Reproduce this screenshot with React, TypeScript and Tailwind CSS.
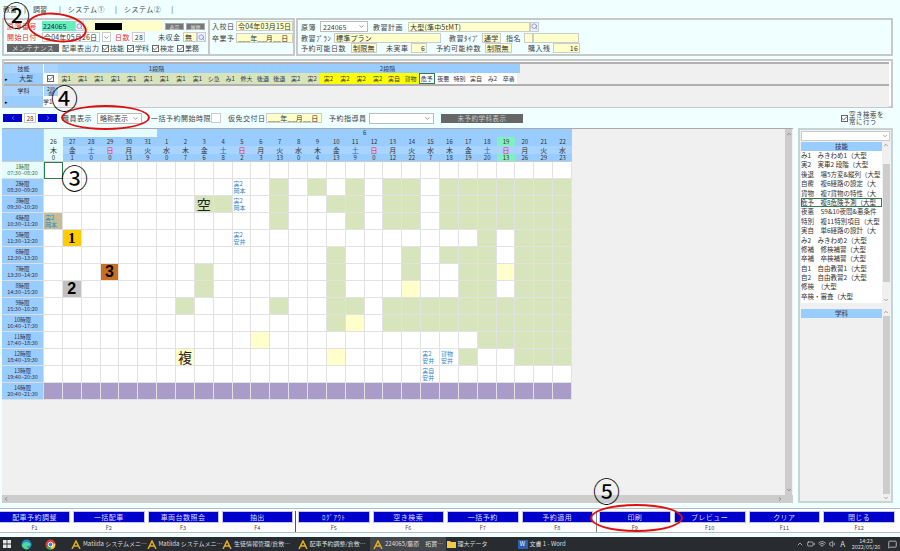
import { ChevronDown, ChevronUp, ChevronLeft, ChevronRight, Search, Check, Volume1, Wifi, Battery, MessageSquare } from 'lucide-react';
import type { ReactNode } from 'react';

const FONT = { fontFamily: '"Noto Sans CJK JP", "Liberation Sans", sans-serif' };

const DATES = [26, 27, 28, 29, 30, 31, 1, 2, 3, 4, 5, 6, 7, 8, 9, 10, 11, 12, 13, 14, 15, 16, 17, 18, 19, 20, 21, 22];
const WEEK = '木金土日月火水木金土日月火水木金土日月火水木金土日月火水'.split('');
const COUNTS = [0, 1, 0, 0, 13, 9, 0, 7, 6, 8, 2, 3, 13, 0, 4, 13, 9, 0, 12, 22, 7, 18, 19, 20, 13, 26, 29, 23];

const PERIODS = [
  ['1時限', '07:30~08:20'],
  ['2時限', '08:30~09:20'],
  ['3時限', '09:30~10:20'],
  ['4時限', '10:30~11:20'],
  ['5時限', '11:30~12:20'],
  ['6時限', '12:30~13:20'],
  ['7時限', '13:30~14:20'],
  ['8時限', '14:30~15:20'],
  ['9時限', '15:30~16:20'],
  ['10時限', '16:40~17:30'],
  ['11時限', '17:40~18:30'],
  ['12時限', '18:40~19:30'],
  ['13時限', '19:40~20:30'],
  ['14時限', '20:40~21:30'],
];

const LATE = [21, 22, 23, 24, 25, 26, 27];
const GREEN: number[][] = [
  [],
  [12, 14, 16, 18, 19, ...LATE],
  [8, 9, 12, 15, 16, 18, 19, ...LATE],
  [12, 16, 18, 19, ...LATE],
  [23, 25, 26, 27],
  [15, 19, 21, 22, 23, 25, 26, 27],
  [8, 15, 19, 22, 23, 25, 26, 27],
  [8, 15, 22, 23, 25, 26, 27],
  [7, 12, 15, 16, 18, 19, 20, 21, 22, 23, 24, 25, 26, 27],
  [15, 18, 19, 20, 21, 22, 23, 24, 25, 26, 27],
  [23, 24, 25, 26, 27],
  [22, 25, 26, 27],
  [],
  [],
];
const PALE: number[][] = [[], [], [], [], [], [], [24], [19], [], [16], [11], [7, 15], [], []];
const NOTES: Record<string, [string, string]> = {
  '1-10': ['実2', '岡本'],
  '2-10': ['実2', '岡本'],
  '3-0': ['実2', '岡本'],
  '4-10': ['実2', '安井'],
  '11-20': ['実2', '安井'],
  '11-21': ['貨物', '安井'],
  '12-20': ['実自', '安井'],
};

const STEP1 = ['実1', '実1', '実1', '実1', '実1', '実1', '実1', '実1', '実1', 'シ急', 'み1', '修大'];
const STEP2 = ['後退', '後退', '実2', '実2', '実2', '実2', '実2', '実2', '実自', '貨物', '危予', '夜悪', '特別', '実自', 'み2', '卒審'];

const SKILLS = [
  'み1　みきわめ1（大型',
  '実2　実車2 段階（大型',
  '後退　場5方変&縦列（大型',
  '自覆　複6経路の設定（大',
  '貨物　複7貨物の特性（大',
  '危予　複8危険予測（大型',
  '夜悪　S9&10夜間&悪条件',
  '特別　複11特別項目（大型',
  '実自　単6経路の設計（大',
  'み2　みきわめ2（大型',
  '修補　修検補習（大型',
  '卒補　卒検補習（大型',
  '自1　自由教習1（大型',
  '自2　自由教習2（大型',
  '修検　（大型',
  '卒検・審査（大型',
];

const KEYS_A = ['配車予約調整', '一括配車', '車両台数照会', '抽出'];
const KEYS_B = ['ﾛｸﾞｱｳﾄ', '空き検索', '一括予約', '予約適用'];
const KEYS_C = ['印刷', 'プレビュー', 'クリア', '閉じる'];

const TASKS = ['Matilda システムメニ…', 'Matilda システムメニ…', '生徒情報管理/倉敷…', '配車予約調整/倉敷…', '224065/藤原　拓實…'];

function Label({ w, children, red }: { w: number; children: ReactNode; red?: boolean }) {
  return (
    <span
      className={`shrink-0 whitespace-nowrap text-[7px] leading-[10px] tracking-[0.5px] ${red ? 'text-[#f03030]' : 'text-[#444]'}`}
      style={{ width: w }}
    >
      {children}
    </span>
  );
}

function Box({ w, children, right, yellow = true }: { w: number; children?: ReactNode; right?: boolean; yellow?: boolean }) {
  return (
    <span
      className={`flex h-[10px] shrink-0 items-center overflow-hidden whitespace-nowrap border border-[#ccc] px-[1px] text-[7px] tracking-[0.2px] text-[#333] ${yellow ? 'bg-[#ffffcc]' : 'bg-white'} ${right ? 'justify-end' : ''}`}
      style={{ width: w }}
    >
      {children}
    </span>
  );
}

function Drop({ w, children }: { w: number; children?: ReactNode }) {
  return (
    <span className="flex h-[11px] shrink-0 items-center justify-between border border-[#bbb] bg-white px-[2px] text-[7px] text-[#444]" style={{ width: w }}>
      {children}
      <ChevronDown size={7} className="ml-auto text-[#555]" />
    </span>
  );
}

function Lens() {
  return (
    <span className="flex h-[10px] w-[9px] shrink-0 items-center justify-center border border-[#ccc] bg-[#eef]">
      <Search size={7} className="text-[#5577aa]" />
    </span>
  );
}

function Tick({ label }: { label?: string }) {
  return (
    <span className="flex shrink-0 items-center gap-[1px] text-[7px] text-[#444]">
      <span className="flex h-[7px] w-[7px] items-center justify-center border border-[#666] bg-white">
        <Check size={7} strokeWidth={3} className="shrink-0 text-[#555]" />
      </span>
      {label}
    </span>
  );
}

function Cell({ row, col }: { row: number; col: number }) {
  const note = NOTES[`${row}-${col}`];
  let bg = 'bg-white';
  if (GREEN[row].includes(col)) bg = 'bg-[#d8e4bc]';
  if (PALE[row].includes(col)) bg = 'bg-[#ffffcc]';
  if (row === 13) bg = 'bg-[#a99cc8]';
  if (row === 3 && col === 0) bg = 'bg-[#c4bd97]';
  if (row === 4 && col === 1) bg = 'bg-[#ffcc00]';
  if (row === 6 && col === 3) bg = 'bg-[#c87020]';
  if (row === 7 && col === 1) bg = 'bg-[#c0c0c0]';
  const selected = row === 0 && col === 0;
  return (
    <div className={`flex h-[17px] min-w-0 items-center justify-center border-b border-r border-[#e2e2e2] ${bg} ${selected ? 'outline outline-1 -outline-offset-1 outline-[#2e7d4f]' : ''}`}>
      {note && (
        <span className="w-full whitespace-nowrap pl-[1px] text-left text-[6px] leading-[7px] text-[#2f86c8]">
          {note[0]}
          <br />
          {note[1]}
        </span>
      )}
      {row === 4 && col === 1 && <span className="text-[15px] font-bold leading-none text-black" style={{ fontFamily: '"Liberation Serif", serif' }}>1</span>}
      {row === 6 && col === 3 && <span className="text-[16px] font-bold leading-none text-black" style={{ fontFamily: '"Liberation Sans", sans-serif' }}>3</span>}
      {row === 7 && col === 1 && <span className="text-[16px] font-bold leading-none text-black" style={{ fontFamily: '"Liberation Sans", sans-serif' }}>2</span>}
      {row === 2 && col === 8 && <span className="text-[14px] leading-none text-[#222]">空</span>}
      {row === 11 && col === 7 && <span className="text-[14px] leading-none text-[#222]">複</span>}
    </div>
  );
}

function ScheduleGrid() {
  return (
    <div className="grid w-[570px] grid-cols-[42px_repeat(28,minmax(0,1fr))] text-center">
      <div className="row-span-4 border-b border-r border-[#ccc] bg-[#99ccff]" />
      <div className="col-span-6 h-[8px] bg-[#e6fbfb] text-[5px] leading-[8px]">&nbsp;</div>
      <div className="col-span-22 h-[8px] bg-[#99ccff] text-[6px] leading-[8px] text-[#333]">6</div>
      {DATES.map((d, i) => (
        <div key={`d${i}`} className={`h-[9px] text-[6px] leading-[9px] text-[#333] ${i === 0 ? 'bg-[#e6fbfb] text-[#2e7d4f]' : i === 24 ? 'bg-[#80f0c0]' : 'bg-[#99ccff]'}`}>
          {d}
        </div>
      ))}
      {WEEK.map((w, i) => (
        <div key={`w${i}`} className={`h-[8px] text-[7px] leading-[8px] ${w === '日' ? 'text-[#e03030]' : w === '土' ? 'text-[#1a70d0]' : 'text-[#333]'} ${i === 0 ? 'bg-[#e6fbfb] text-[#2e7d4f]' : 'bg-[#a8d4ff]'}`}>
          {w}
        </div>
      ))}
      {COUNTS.map((c, i) => (
        <div key={`c${i}`} className={`h-[8px] border-b border-[#ccc] text-[6px] leading-[7px] text-[#333] ${i === 0 ? 'bg-[#e6fbfb] text-[#2e7d4f]' : i === 24 ? 'bg-[#80f0c0]' : 'bg-[#99ccff]'}`}>
          {c}
        </div>
      ))}
      {PERIODS.map((p, r) => (
        <div key={p[0]} className="contents">
          <div className={`flex h-[17px] flex-col items-center justify-center whitespace-nowrap border-b border-r border-[#ddd] text-[5.5px] leading-[6.5px] ${r === 0 ? 'bg-[#e6fbfb] text-[#2e7d4f]' : 'bg-[#99ccff] text-[#334]'}`}>
            <span>{p[0]}</span>
            <span>{p[1]}</span>
          </div>
          {DATES.map((_, c) => (
            <Cell key={c} row={r} col={c} />
          ))}
        </div>
      ))}
    </div>
  );
}

function FnKey({ label, fn }: { label: string; fn: string }) {
  return (
    <div className="flex flex-1 flex-col items-center">
      <div className="flex h-[13px] w-full items-center justify-center border border-[#c4c4dc] bg-[#0000cc] text-[7px] tracking-[0.5px] text-[#dde]">{label}</div>
      <span className="mt-[1px] text-[5.5px] leading-[8px] text-[#444]">{fn}</span>
    </div>
  );
}

function Circled({ className, children }: { className: string; children: string }) {
  return <span className={`absolute text-[27px] leading-none text-black ${className}`}>{children}</span>;
}

export default function App() {
  return (
    <div className="relative flex h-[551px] w-[900px] flex-col overflow-hidden bg-[#f0ffff] text-[7px] leading-[10px]" style={FONT}>
      {/* menu */}
      <div className="flex h-[18px] items-center gap-[7px] pl-[3px] text-[7px] text-[#444]">
        <span>教習</span>
        <span>|</span>
        <span>調習</span>
        <span className="ml-[5px]">|</span>
        <span className="tracking-[0.5px]">システム①</span>
        <span className="ml-[3px]">|</span>
        <span className="tracking-[0.5px]">システム②</span>
        <span className="ml-[3px]">|</span>
      </div>

      {/* top panels */}
      <div className="flex h-[38px] pl-[2px]">
        <div className="flex w-[208px] flex-col justify-between border-2 border-[#c8c8c8] px-[3px] py-[1px]">
          <div className="flex items-center">
            <Label w={35} red>原簿番号</Label>
            <span className="flex h-[10px] w-[33px] items-center bg-[#66eebb] px-[1px] text-[7px] text-[#225]">224065</span>
            <Lens />
            <span className="ml-[1px] flex h-[10px] w-[78px] items-center bg-[#ffffcc] pl-[10px]">
              <span className="h-[7px] w-[27px] bg-black" />
            </span>
            <span className="ml-[2px] h-[7px] w-[19px] border border-[#aaa] bg-[#777] text-center text-[5px] leading-[5px] text-[#ddd]">表示</span>
            <span className="ml-[2px] h-[7px] w-[19px] border border-[#aaa] bg-[#777] text-center text-[5px] leading-[5px] text-[#ddd]">履歴</span>
          </div>
          <div className="flex items-center">
            <Label w={35} red>開始日付</Label>
            <Box w={58} yellow={false}>令04年05月26日</Box>
            <span className="ml-[2px] flex h-[10px] w-[10px] items-center justify-center border border-[#ccc] bg-white">
              <ChevronDown size={7} className="text-[#555]" />
            </span>
            <span className="ml-[4px] flex"><Label w={17} red>日数</Label></span>
            <Box w={13} right yellow={false}>28</Box>
            <span className="ml-[13px] flex"><Label w={25}>未収金</Label></span>
            <Box w={14}>無</Box>
            <Lens />
          </div>
          <div className="flex items-center gap-[3px]">
            <span className="flex h-[8px] w-[52px] items-center justify-center bg-[#666] text-[6.5px] tracking-[0.5px] text-[#ddd]">メンテナンス</span>
            <Label w={37}>配車表出力</Label>
            <Tick label="技能" />
            <Tick label="学科" />
            <Tick label="検定" />
            <Tick label="業務" />
          </div>
        </div>

        <div className="flex w-[85px] flex-col gap-[2px] border-y-2 border-r-2 border-[#c8c8c8] px-[2px] py-[1px]">
          <div className="flex items-center">
            <Label w={24}>入校日</Label>
            <Box w={57}>令04年03月15日</Box>
          </div>
          <div className="flex items-center">
            <Label w={24}>卒業予</Label>
            <Box w={57}>___年__月__日</Box>
          </div>
        </div>

        <div className="ml-[1px] flex w-[597px] flex-col justify-between border-2 border-[#c8c8c8] py-[1px] pl-[3px]">
          <div className="flex items-center">
            <Label w={19}>原簿</Label>
            <Drop w={48}>224065</Drop>
            <span className="ml-[5px] flex"><Label w={35}>教習計画</Label></span>
            <Box w={122}>大型(準中5tMT)</Box>
            <Lens />
          </div>
          <div className="flex items-center">
            <Label w={33}>教習ﾌﾟﾗﾝ</Label>
            <Box w={107}>標準プラン</Box>
            <span className="ml-[8px] flex"><Label w={33}>教習ﾀｲﾌﾟ</Label></span>
            <Box w={19}>通学</Box>
            <span className="ml-[5px] flex"><Label w={18}>指名</Label></span>
            <Box w={9} />
            <Box w={46} />
          </div>
          <div className="flex items-center">
            <Label w={50}>予約可能日数</Label>
            <Box w={26}>制限無</Box>
            <span className="ml-[9px] flex"><Label w={25}>未実車</Label></span>
            <Box w={16} right>6</Box>
            <span className="ml-[9px] flex"><Label w={49}>予約可能枠数</Label></span>
            <Box w={27}>制限無</Box>
            <span className="ml-[16px] flex"><Label w={25}>購入残</Label></span>
            <Box w={27} right>16</Box>
          </div>
        </div>
      </div>

      {/* course table */}
      <div className="ml-[2px] mt-[3px] h-[49px] w-[891px] border-2 border-[#c8c8c8] bg-white pr-[2px] pt-[1px]">
        <div className="h-[22px] border-t-2 border-[#b0b0b0] bg-[#f0f0f0]">
          <div className="flex h-[9px] text-center text-[6px] leading-[9px] text-[#334]">
            <span className="w-[39px] bg-[#a8d4ff]">技能</span>
            <span className="w-[15px] border-l border-white bg-[#a8d4ff]" />
            <span className="w-[197px] bg-[#99ccff]">1段階</span>
            <span className="w-[265px] bg-[#99ccff]">2段階</span>
          </div>
          <div className="flex h-[11px] text-center text-[6px] leading-[11px] text-[#334]">
            <span className="w-[5px] bg-[#99ccff] text-[5px] text-black">▸</span>
            <span className="w-[34px] bg-[#99ccff] text-[7px]">大型</span>
            <span className="flex w-[15px] items-center justify-center bg-white"><Tick /></span>
            {STEP1.map((s, i) => (
              <span key={`a${i}`} className="w-[16.4px] bg-[#d8e4bc]">{s}</span>
            ))}
            {STEP2.map((s, i) => (
              <span
                key={`b${i}`}
                className={`w-[16.4px] ${i < 4 ? 'bg-[#d8e4bc]' : i < 10 ? 'bg-[#ffff00]' : 'bg-white'} ${i === 10 ? 'outline outline-1 -outline-offset-1 outline-[#2e7d4f]' : ''}`}
              >
                {s}
              </span>
            ))}
          </div>
        </div>
        <div className="h-[23px] border-t-2 border-[#b0b0b0] bg-[#f0f0f0]">
          <div className="flex h-[10px] text-center text-[6px] leading-[10px] text-[#334]">
            <span className="w-[39px] bg-[#a8d4ff]">学科</span>
            <span className="w-[15px] border-l border-white bg-[#a8d4ff] text-[5px] leading-[5px]">2段<br />階</span>
          </div>
          <div className="flex h-[11px] text-center text-[6px] leading-[11px] text-[#334]">
            <span className="w-[5px] bg-[#99ccff] text-[5px] text-black">▸</span>
            <span className="w-[34px] bg-[#99ccff]" />
            <span className="w-[15px] bg-white text-left">学1</span>
          </div>
        </div>
      </div>

      {/* controls */}
      <div className="flex h-[20px] items-center pl-[3px]">
        <span className="flex h-[8px] w-[19px] items-center justify-center bg-[#0000cc] text-[#dde]"><ChevronLeft size={6} /></span>
        <span className="mx-[2px] flex h-[10px] w-[12px] items-center justify-center border border-[#ccc] bg-white text-[6.5px] text-[#444]">28</span>
        <span className="flex h-[8px] w-[19px] items-center justify-center bg-[#0000cc] text-[#dde]"><ChevronRight size={6} /></span>
        <span className="ml-[5px] flex"><Label w={35}>職員表示</Label></span>
        <Drop w={45}>略称表示</Drop>
        <span className="ml-[9px] flex"><Label w={60}>一括予約開始時限</Label></span>
        <Box w={10} yellow={false} />
        <span className="ml-[7px] flex"><Label w={38}>仮免交付日</Label></span>
        <Box w={56}>___年__月__日</Box>
        <span className="ml-[7px] flex"><Label w={40}>予約指導員</Label></span>
        <Drop w={65} />
        <span className="ml-[7px] flex h-[9px] w-[82px] items-center justify-center bg-[#666] text-[6.5px] tracking-[0.5px] text-[#ccc]">未予約学科表示</span>
        <span className="ml-[318px] flex"><Tick /></span>
        <span className="ml-[1px] text-[6.5px] leading-[7px] tracking-[0.5px] text-[#444]">空き検索を<br />常に行う</span>
      </div>

      {/* schedule + side lists */}
      <div className="flex h-[375px] pl-[2px]">
        <div className="flex w-[791px] flex-col">
          <div className="flex min-h-0 flex-1 border-t border-[#aaa] bg-[#f0f0f0]">
            <div className="flex-1"><ScheduleGrid /></div>
            <div className="mr-[1px] flex w-[7px] flex-col items-center justify-between bg-[#cdcdcd] py-[2px]">
              <ChevronUp size={6} className="text-[#444]" />
              <ChevronDown size={6} className="text-[#444]" />
            </div>
          </div>
          <div className="flex h-[8px] items-center justify-between bg-[#cdcdcd] px-[1px]">
            <ChevronLeft size={6} className="text-[#444]" />
            <ChevronRight size={6} className="mr-[9px] text-[#444]" />
          </div>
        </div>
        <div className="ml-[5px] flex w-[95px] flex-col border-2 border-[#c8d4d4] bg-[#f0f0f0] px-[1px] pt-[1px]">
          <div className="flex h-[10px] items-center justify-end border border-[#ccc] bg-white pr-[1px]">
            <ChevronDown size={6} className="text-[#555]" />
          </div>
          <div className="mt-[1px] flex h-[161px] bg-white">
            <div className="min-w-0 flex-1 overflow-hidden">
              <div className="h-[9px] bg-[#99ccff] text-center text-[6.5px] leading-[9px] text-[#334]">技能</div>
              {SKILLS.map((s, i) => (
                <div
                  key={i}
                  className={`h-[9.4px] overflow-hidden whitespace-nowrap text-[6.5px] leading-[9.4px] text-[#333] ${i === 5 ? 'outline outline-1 -outline-offset-1 outline-[#2e7d4f]' : ''}`}
                >
                  {s}
                </div>
              ))}
            </div>
            <div className="flex w-[8px] flex-col items-center justify-between bg-[#f0f0f0]">
              <ChevronUp size={6} className="text-[#555]" />
              <div className="mb-auto mt-[16px] h-[118px] w-[7px] bg-[#cdcdcd]" />
              <ChevronDown size={6} className="text-[#555]" />
            </div>
          </div>
          <div className="mt-[6px] flex flex-1 bg-[#f0f0f0]">
            <div className="flex-1">
              <div className="h-[9px] bg-[#99ccff] text-center text-[6.5px] leading-[9px] text-[#334]">学科</div>
            </div>
            <div className="flex w-[8px] flex-col items-center justify-between">
              <ChevronUp size={6} className="text-[#555]" />
              <div className="my-[1px] w-[7px] flex-1 bg-[#cdcdcd]" />
              <ChevronDown size={6} className="text-[#555]" />
            </div>
          </div>
        </div>
      </div>

      {/* function keys */}
      <div className="mt-[5px] flex h-[25px] border-y border-[#bbb] bg-[#fdfdfd] pt-[2px]">
        <div className="-ml-[1px] flex w-[297px] gap-[3px] border-r border-[#555] pr-[2px]">
          {KEYS_A.map((k, i) => <FnKey key={k} label={k} fn={`F${i + 1}`} />)}
        </div>
        <div className="flex w-[301px] gap-[3px] border-r border-[#888] pl-[2px] pr-[3px]">
          {KEYS_B.map((k, i) => <FnKey key={k} label={k} fn={`F${i + 5}`} />)}
        </div>
        <div className="flex w-[298px] gap-[3px] pl-[2px]">
          {KEYS_C.map((k, i) => <FnKey key={k} label={k} fn={`F${i + 9}`} />)}
        </div>
      </div>

      {/* taskbar */}
      <div className="mt-[4px] flex h-[14px] items-center bg-[#282c30] text-[6px] text-[#ddd]">
        <svg width="8" height="8" viewBox="0 0 8 8" className="ml-[3px]">
          <path d="M0 0h3.6v3.6H0zM4.4 0H8v3.6H4.4zM0 4.4h3.6V8H0zM4.4 4.4H8V8H4.4z" fill="#e8e8e8" />
        </svg>
        <svg width="11" height="11" viewBox="0 0 12 12" className="ml-[10px]">
          <circle cx="6" cy="6" r="5.5" fill="#1b8fd0" />
          <path d="M1 7c1-4 6-5 9-2 1 2-1 3-3 2.500-1 2 1 3 2 3-3 2-7 0-8-3.500z" fill="#55d88a" />
        </svg>
        <svg width="11" height="11" viewBox="0 0 12 12" className="ml-[13px]">
          <circle cx="6" cy="6" r="5.500" fill="#e04030" />
          <path d="M6 6L1 9a5.500 5.500 0 0 0 6 2.500z" fill="#40a850" />
          <path d="M6 6l5-1.500A5.500 5.500 0 0 1 7 11.500z" fill="#f8c830" />
          <circle cx="6" cy="6" r="2.500" fill="#3878e0" stroke="#fff" />
        </svg>
        <div className="ml-[12px] flex">
          {TASKS.map((t, i) => (
            <span key={i} className={`flex h-[14px] w-[75.500px] items-center gap-[2px] whitespace-nowrap pl-[3px] ${i === 4 ? 'bg-[#44484c]' : ''}`}>
              <svg width="10" height="9" viewBox="0 0 10 9" className="shrink-0">
                <path d="M1 9L5 1l4 8M2 6h6" fill="none" stroke="#e0b020" strokeWidth="1.500" />
              </svg>
              {t}
            </span>
          ))}
        </div>
        <svg width="9" height="8" viewBox="0 0 9 8" className="ml-[1px]">
          <path d="M0 1h3l1 1h5v6H0z" fill="#f0c850" />
        </svg>
        <span className="ml-[2px] w-[60px]">理大データ</span>
        <span className="mr-[2px] flex h-[9px] w-[10px] items-center justify-center bg-[#2b5fb0] text-[6px] text-white">W</span>
        <span>文書 1 - Word</span>
        <span className="ml-auto flex items-center gap-[3px] pr-[3px]">
          <ChevronUp size={8} />
          <Battery size={8} />
          <Wifi size={8} />
          <Volume1 size={8} />
          <span className="text-[8px]">A</span>
          <span className="ml-[2px] w-[32px] text-center text-[5.500px] leading-[6px]">14:23<br />2022/05/26</span>
          <MessageSquare size={9} className="ml-[3px]" />
        </span>
      </div>

      {/* annotations */}
      <div className="absolute left-[27px] top-[13px] h-[29px] w-[60px] rotate-[8deg] rounded-[50%] border-2 border-[#e01010]" />
      <div className="absolute left-[61px] top-[105px] h-[25px] w-[89px] rounded-[50%] border-[2.5px] border-[#e01010]" />
      <div className="absolute left-[590px] top-[504px] h-[28px] w-[93px] rounded-[50%] border-[2.5px] border-[#e01010]" />
      <Circled className="left-[3px] top-[1px]">②</Circled>
      <Circled className="left-[51px] top-[84px]">④</Circled>
      <Circled className="left-[61px] top-[164px]">③</Circled>
      <Circled className="left-[593px] top-[477px]">⑤</Circled>
    </div>
  );
}
